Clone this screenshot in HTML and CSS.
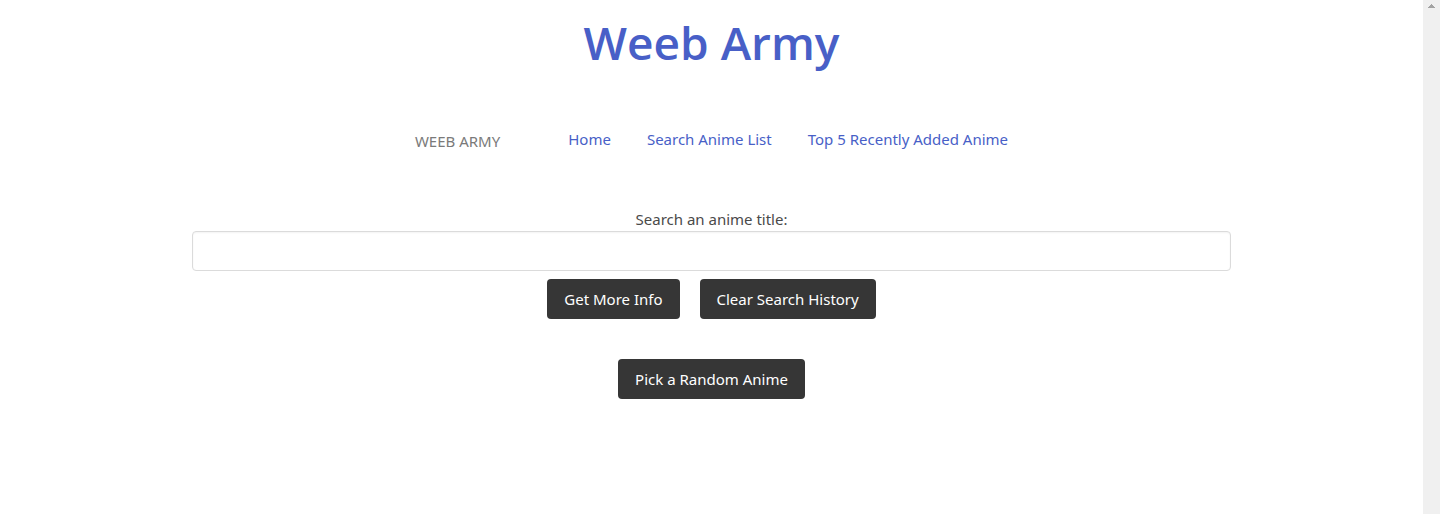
FILE: index.html
```html
<!DOCTYPE html>
<html lang="en">
<head>
<meta charset="utf-8">
<title>Weeb Army</title>
<link rel="stylesheet" href="styles.css">
</head>
<body>
<div class="page">
  <header class="header">
    <h1 class="title">Weeb Army</h1>
    <nav class="nav">
      <span class="brand">WEEB ARMY</span>
      <a class="nav-link" href="#home">Home</a>
      <a class="nav-link" href="#search">Search Anime List</a>
      <a class="nav-link" href="#recent">Top 5 Recently Added Anime</a>
    </nav>
  </header>
  <main class="main">
    <form class="search" id="search">
      <label class="label" for="anime-title">Search an anime title:</label>
      <input class="input" id="anime-title" type="text">
      <div class="actions">
        <button class="button" type="button">Get More Info</button>
        <button class="button" type="button">Clear Search History</button>
      </div>
    </form>
    <button class="button" type="button">Pick a Random Anime</button>
  </main>
</div>
<div class="scrollbar" aria-hidden="true">
  <svg class="scroll-arrow" width="7" height="4" viewBox="0 0 7 4" shape-rendering="crispEdges"><path d="M3 0h1v1h1v1h1v1h1v1H0V3h1V2h1V1h1z" fill="#a3a3a3"/></svg>
</div>
</body>
</html>
```
FILE: styles.css
```css
* {
  box-sizing: border-box;
}

body {
  display: flex;
  min-height: 100vh;
  margin: 0;
  background: #fff;
  color: #4a4a4a;
  font: 15px/24px "Noto Sans", "Open Sans", sans-serif;
}

.page {
  flex: 1;
}

.title {
  margin: 0;
  padding-top: 15px;
  color: #485fc7;
  font-family: "Open Sans", "Noto Sans", sans-serif;
  font-size: 46px;
  font-weight: 600;
  line-height: 54px;
  text-align: center;
}

.nav {
  display: flex;
  justify-content: center;
  gap: 36px;
  padding-top: 58px;
}

.brand {
  margin-right: 32px;
  padding-top: 2px;
  color: #7a7a7a;
}

.nav-link {
  color: #485fc7;
  text-decoration: none;
}

.main {
  display: flex;
  flex-direction: column;
  align-items: center;
  gap: 40px;
  padding: 54px 192px 0;
}

.search {
  display: flex;
  flex-direction: column;
  align-items: center;
  width: 100%;
}

.input {
  width: 100%;
  height: 40px;
  padding: 0 11px;
  border: 1px solid #dbdbdb;
  border-radius: 4px;
  box-shadow: inset 0 1px 2px rgba(10, 10, 10, 0.05);
  color: #363636;
  font: inherit;
}

.actions {
  display: flex;
  gap: 20px;
  margin-top: 8px;
}

.button {
  height: 40px;
  padding: 0 17px;
  border: 0;
  border-radius: 4px;
  background: #363636;
  color: #fff;
  font: inherit;
  cursor: pointer;
}

.scrollbar {
  display: flex;
  justify-content: center;
  width: 17px;
  padding-top: 4px;
  background: #f0f0f0;
}
```
